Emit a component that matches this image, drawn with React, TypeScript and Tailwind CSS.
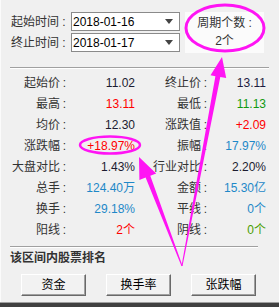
import React from 'react';

type Cell = { label: string; value: string; color: string };

const FONT = { fontFamily: '"Liberation Sans", "Noto Sans CJK SC", sans-serif' };

const rows: [Cell, Cell][] = [
  [
    { label: '起始价', value: '11.02', color: 'text-[#1c1c30]' },
    { label: '终止价', value: '13.11', color: 'text-[#1c1c40]' },
  ],
  [
    { label: '最高', value: '13.11', color: 'text-[#ff0000]' },
    { label: '最低', value: '11.13', color: 'text-[#109a10]' },
  ],
  [
    { label: '均价', value: '12.30', color: 'text-[#1c1c30]' },
    { label: '涨跌值', value: '+2.09', color: 'text-[#ff0000]' },
  ],
  [
    { label: '涨跌幅', value: '+18.97%', color: 'text-[#ff0000]' },
    { label: '振幅', value: '17.97%', color: 'text-[#1e88c8]' },
  ],
  [
    { label: '大盘对比', value: '1.43%', color: 'text-[#1c1c30]' },
    { label: '行业对比', value: '2.20%', color: 'text-[#1c1c30]' },
  ],
  [
    { label: '总手', value: '124.40万', color: 'text-[#1e88c8]' },
    { label: '金额', value: '15.30亿', color: 'text-[#1e88c8]' },
  ],
  [
    { label: '换手', value: '29.18%', color: 'text-[#1e88c8]' },
    { label: '平线', value: '0个', color: 'text-[#1e88c8]' },
  ],
  [
    { label: '阳线', value: '2个', color: 'text-[#ff0000]' },
    { label: '阴线', value: '0个', color: 'text-[#4a9e00]' },
  ],
];

function Label({ text }: { text: string }) {
  return (
    <div className="flex items-center justify-end text-[#333]">
      <span>{text}</span>
      <span className="w-[9px] text-center">:</span>
    </div>
  );
}

function DateBox({ label, value }: { label: string; value: string }) {
  return (
    <div className="flex items-center h-[19px]">
      <span className="w-[48px] text-[#333]">{label}</span>
      <span className="w-[10px] text-center text-[#333]">:</span>
      <div className="ml-[2px] w-[109px] h-[19px] bg-white border border-[#8a8a8a] flex items-center justify-between pl-[1px] pr-[6px]">
        <span className="text-black text-[12px]">{value}</span>
        <svg width="8" height="5" viewBox="0 0 8 5">
          <path d="M0 0 L8 0 L4 5 Z" fill="#444" />
        </svg>
      </div>
    </div>
  );
}

function Arrow({ points }: { points: string }) {
  return <polygon points={points} fill="#ff14f4" />;
}

export default function App() {
  return (
    <div
      className="relative w-[279px] h-[307px] bg-[#f0f0f0] flex flex-col text-[12px] leading-none overflow-hidden shadow-[inset_1px_0_0_#fbfbfb]"
      style={FONT}
    >
      <div className="flex pt-[12px] pl-[11px]">
        <div className="flex flex-col gap-[2px]">
          <DateBox label="起始时间" value="2018-01-16" />
          <DateBox label="终止时间" value="2018-01-17" />
        </div>
        <div className="ml-[5px] w-[79px] h-[41px] bg-[#fbfbfb] flex flex-col items-center pt-[2px] text-[#333]">
          <div className="h-[18px] flex items-center">周期个数 :</div>
          <div className="h-[18px] flex items-center">2个</div>
        </div>
      </div>

      <div className="mt-[14px] mx-[10px]">
        <div className="h-px bg-[#a0a0a0]" />
        <div className="h-px bg-white" />
      </div>

      <div className="mt-[3px] grid grid-cols-[69px_66px_75px_56px] auto-rows-[21px]">
        {rows.map(([l, r]) => (
          <React.Fragment key={l.label}>
            <Label text={l.label} />
            <div className={`flex items-center justify-end ${l.color}`}>{l.value}</div>
            <Label text={r.label} />
            <div className={`flex items-center justify-end ${r.color}`}>{r.value}</div>
          </React.Fragment>
        ))}
      </div>

      <div className="mt-[6px] ml-[10px] mr-[21px]">
        <div className="h-px bg-[#a0a0a0]" />
        <div className="h-px bg-white" />
      </div>

      <div className="mt-[2px] pl-[10px] h-[16px] flex items-center font-bold text-[#333]">该区间内股票排名</div>

      <div className="mt-[8px] flex pl-[21px] gap-[20px]">
        {['资金', '换手率', '张跌幅'].map((t) => (
          <button
            key={t}
            className="w-[65px] h-[22px] bg-[#f2f2f2] border border-t-white border-l-white border-r-[#696969] border-b-[#696969] shadow-[inset_-1px_-1px_0_#a0a0a0] text-black flex items-center justify-center"
          >
            {t}
          </button>
        ))}
      </div>

      <div className="mt-[6px] h-px bg-[#a0a0a0]" />
      <div className="h-[4px] bg-[#404040]" />

      <svg className="absolute inset-0 pointer-events-none" width="279" height="307" viewBox="0 0 279 307">
        <ellipse cx="225" cy="28" rx="39" ry="23" fill="none" stroke="#ff14f4" strokeWidth="3" />
        <ellipse cx="110" cy="145" rx="30" ry="8.5" fill="none" stroke="#ff14f4" strokeWidth="2.5" />
        <Arrow points="182.5,266.1 220.3,77.1 226.2,78.1 222,57 210.5,75.2 215.4,76.2 181.5,265.9" />
        <Arrow points="182.47,265.82 150.3,175.8 156.2,173.5 139,157 139.4,180.0 145.6,177.6 181.53,266.18" />
      </svg>
    </div>
  );
}
